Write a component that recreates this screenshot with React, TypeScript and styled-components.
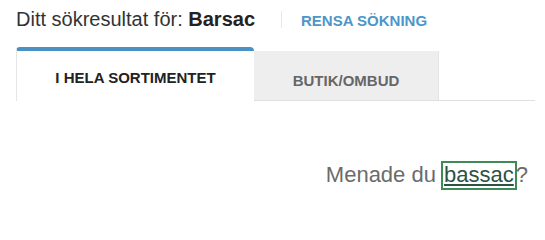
import * as React from 'react';
import styled, { createGlobalStyle } from 'styled-components';

const GlobalStyle = createGlobalStyle`
  body {
    margin: 0;
    background: #fff;
    font-family: 'Liberation Sans', Arial, sans-serif;
  }
`;

const Page = styled.div`
  padding: 8px 10px 0 16px;
`;

const ResultBar = styled.div`
  display: flex;
  align-items: baseline;
`;

const Heading = styled.h1`
  margin: 0;
  font-size: 20px;
  line-height: 23px;
  font-weight: 400;
  color: #333;
  b {
    font-weight: 700;
    color: #222;
  }
`;

const Divider = styled.span`
  align-self: center;
  width: 1px;
  height: 17px;
  margin: 0 19px 0 26px;
  background: #e8e8e8;
`;

const ClearLink = styled.a`
  font-size: 15px;
  line-height: 17px;
  font-weight: 700;
  color: #4c96c8;
  text-decoration: none;
`;

const TabList = styled.div`
  display: flex;
  align-items: flex-end;
  margin-top: 16px;
  border-bottom: 1px solid #e0e0e0;
`;

type tab = { active?: boolean };
const Tab = styled.div<tab>`
  box-sizing: border-box;
  font-size: 15px;
  line-height: 17px;
  font-weight: 700;
  text-align: center;
  ${({ active }) =>
    active
      ? `
    width: 238px;
    padding: 18px 0 15px;
    margin-bottom: -1px;
    border-top: 4px solid #4a91c4;
    border-left: 1px solid #e6e6e6;
    border-radius: 4px 4px 0 0;
    background: #fff;
    color: #222;
  `
      : `
    width: 185px;
    padding: 21px 0 11px;
    border-right: 1px solid #e4e4e4;
    background: #eeeeee;
    color: #666;
  `}
`;

const Suggestion = styled.p`
  margin: 60px 7px 0 0;
  font-size: 22px;
  line-height: 26px;
  text-align: right;
  color: #6b6b6b;
`;

const SuggestLink = styled.a`
  display: inline-block;
  line-height: 24px;
  padding: 0 1px 1px;
  color: #2b5244;
  text-decoration: underline;
  border: 2px solid #3d8b57;
  margin: 0 -1px;
`;

export default function App() {
  return (
    <>
      <GlobalStyle />
      <Page>
        <ResultBar>
          <Heading>
            Ditt sökresultat för: <b>Barsac</b>
          </Heading>
          <Divider />
          <ClearLink href="#">RENSA SÖKNING</ClearLink>
        </ResultBar>
        <TabList>
          <Tab active>I HELA SORTIMENTET</Tab>
          <Tab>BUTIK/OMBUD</Tab>
        </TabList>
        <Suggestion>
          Menade du <SuggestLink href="#">bassac</SuggestLink>?
        </Suggestion>
      </Page>
    </>
  );
}
